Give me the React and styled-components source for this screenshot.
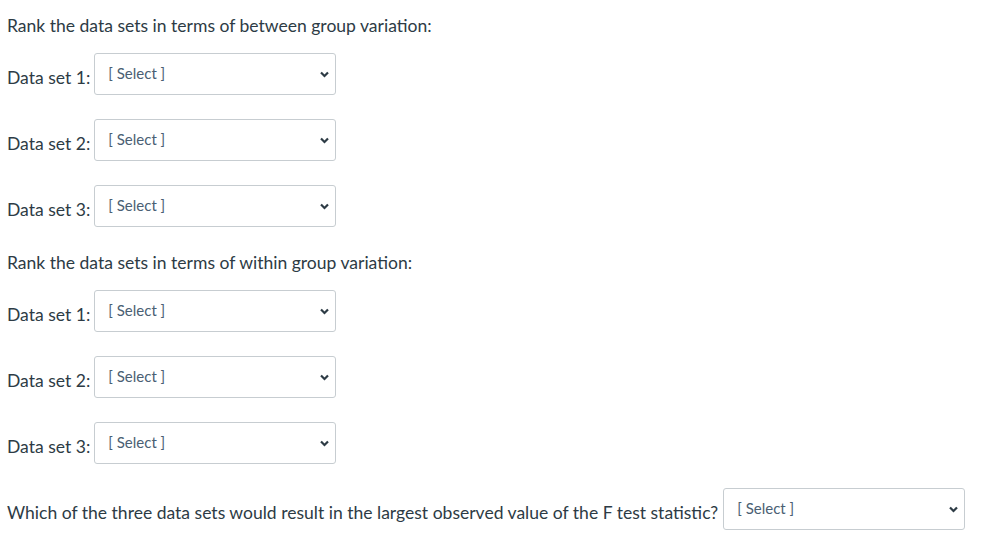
import React from "react";
import styled, { createGlobalStyle } from "styled-components";

const GlobalStyle = createGlobalStyle`
  body {
    margin: 0;
    background: #fff;
    font-family: Lato, "Noto Sans", sans-serif;
    color: #2d3b45;
  }
`;

const Page = styled.div`
  padding: 15px 7px 0;
  display: flex;
  flex-direction: column;
`;

const Question = styled.p`
  margin: 0 0 ${(p) => p.gap || 16}px;
  font-size: 17.55px;
  line-height: 22px;
`;

const Row = styled.div`
  display: flex;
  align-items: flex-end;
  gap: ${(p) => p.gap || 4}px;
  margin-bottom: ${(p) => (p.bottom != null ? p.bottom : 24)}px;
`;

const Label = styled.span`
  font-size: 17.55px;
  line-height: 22px;
  padding-bottom: 6px;
  white-space: nowrap;
`;

const SelectBox = styled.div`
  box-sizing: border-box;
  width: 242px;
  height: 42px;
  border: 1px solid #c7cdd1;
  border-radius: 3px;
  padding: 9px 12px 0 13px;
  position: relative;
  font-size: 15px;
  line-height: 20px;
  color: #4a6073;
  background: #fff;
`;

const Chevron = styled.svg`
  position: absolute;
  right: 6px;
  top: 17px;
`;

const Select = () => (
  <SelectBox>
    [ Select ]
    <Chevron width="9" height="7" viewBox="0 0 9 7">
      <path d="M1 1.5 L4.5 5 L8 1.5" fill="none" stroke="#2d3b45" strokeWidth="2.2" />
    </Chevron>
  </SelectBox>
);

const Group = ({ title, after }) => (
  <>
    <Question>{title}</Question>
    {[1, 2, 3].map((n) => (
      <Row key={n} bottom={n === 3 ? after : 24}>
        <Label>Data set {n}:</Label>
        <Select />
      </Row>
    ))}
  </>
);

export default function App() {
  return (
    <>
      <GlobalStyle />
      <Page>
        <Group title="Rank the data sets in terms of between group variation:" after={25} />
        <Group title="Rank the data sets in terms of within group variation:" after={24} />
        <Row gap={5}>
          <Label>
            Which of the three data sets would result in the largest observed value of the F test statistic?
          </Label>
          <Select />
        </Row>
      </Page>
    </>
  );
}
